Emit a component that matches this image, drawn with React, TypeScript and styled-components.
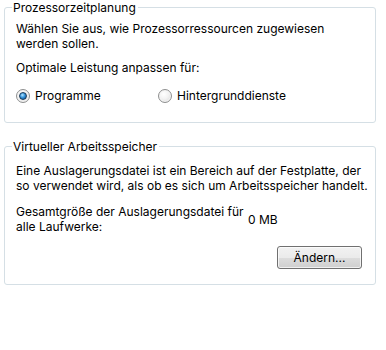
import styled, { createGlobalStyle } from "styled-components";

const GlobalStyle = createGlobalStyle`
  body {
    margin: 0;
    background: #ffffff;
    font-family: Inter, "Noto Sans", sans-serif;
    font-size: 12px;
    color: #000000;
  }
`;

const Page = styled.div`
  width: 386px;
  height: 350px;
  padding: 1px 0 0 4px;
  box-sizing: border-box;
  display: flex;
  flex-direction: column;
  gap: 17px;
`;

const Group = styled.fieldset`
  width: 372px;
  box-sizing: border-box;
  margin: 0;
  padding: 0 0 0 11px;
  border: 1px solid #d5dfe5;
  border-radius: 3px;
  min-width: 0;
`;

const Legend = styled.legend`
  padding: 0 2px 0 1px;
  margin-left: -4px;
  line-height: 13px;
  font-size: 12px;
`;

const Text = styled.p<{ $top?: number }>`
  margin: ${(p) => p.$top ?? 0}px 0 0 0;
  line-height: 15px;
  white-space: nowrap;
`;

const RadioRow = styled.div`
  display: flex;
  align-items: center;
  line-height: 15px;
  margin: 13px 0 19px 0;
`;

const RadioLabel = styled.label<{ $width?: number }>`
  display: flex;
  align-items: center;
  gap: 5px;
  width: ${(p) => (p.$width ? `${p.$width}px` : "auto")};
`;

const RadioCircle = styled.span<{ $checked?: boolean }>`
  width: 14px;
  height: 14px;
  box-sizing: border-box;
  border-radius: 50%;
  border: 1px solid #8e8f8f;
  background: radial-gradient(circle at 40% 35%, #ffffff 0%, #f2f2f2 45%, #d2d2d2 100%);
  box-shadow: inset 0 0 0 1px #f4f4f4;
  display: flex;
  align-items: center;
  justify-content: center;

  &::after {
    content: "";
    display: ${(p) => (p.$checked ? "block" : "none")};
    width: 8px;
    height: 8px;
    border-radius: 50%;
    box-sizing: border-box;
    border: 1px solid #1a3b5a;
    background: radial-gradient(circle at 40% 35%, #b4e6ff 0%, #3594dc 45%, #0b4784 100%);
  }
`;

const SizeRow = styled.div`
  display: flex;
  align-items: center;
  margin-top: 11px;
`;

const SizeLabel = styled.div`
  width: 232px;
  line-height: 15px;
  white-space: nowrap;
`;

const SizeValue = styled.div`
  line-height: 15px;
`;

const ButtonRow = styled.div`
  display: flex;
  justify-content: flex-end;
  margin: 12px 13px 15px 0;
`;

const Button = styled.button`
  width: 85px;
  height: 23px;
  box-sizing: border-box;
  border: 1px solid #707070;
  border-radius: 3px;
  font-family: inherit;
  font-size: 12px;
  color: #000000;
  padding: 0;
  background: linear-gradient(
    to bottom,
    #f2f2f2 0%,
    #ebebeb 50%,
    #dddddd 51%,
    #cfcfcf 100%
  );
  box-shadow: inset 0 0 0 1px rgba(255, 255, 255, 0.7);
`;

export default function App() {
  return (
    <>
      <GlobalStyle />
      <Page>
        <Group>
          <Legend>Prozessorzeitplanung</Legend>
          <Text $top={7}>
            Wählen Sie aus, wie Prozessorressourcen zugewiesen
            <br />
            werden sollen.
          </Text>
          <Text $top={9}>Optimale Leistung anpassen für:</Text>
          <RadioRow>
            <RadioLabel $width={142}>
              <RadioCircle $checked />
              Programme
            </RadioLabel>
            <RadioLabel>
              <RadioCircle />
              Hintergrunddienste
            </RadioLabel>
          </RadioRow>
        </Group>
        <Group>
          <Legend>Virtueller Arbeitsspeicher</Legend>
          <Text $top={10}>
            Eine Auslagerungsdatei ist ein Bereich auf der Festplatte, der
            <br />
            so verwendet wird, als ob es sich um Arbeitsspeicher handelt.
          </Text>
          <SizeRow>
            <SizeLabel>
              Gesamtgröße der Auslagerungsdatei für
              <br />
              alle Laufwerke:
            </SizeLabel>
            <SizeValue>0 MB</SizeValue>
          </SizeRow>
          <ButtonRow>
            <Button>Ändern...</Button>
          </ButtonRow>
        </Group>
      </Page>
    </>
  );
}
